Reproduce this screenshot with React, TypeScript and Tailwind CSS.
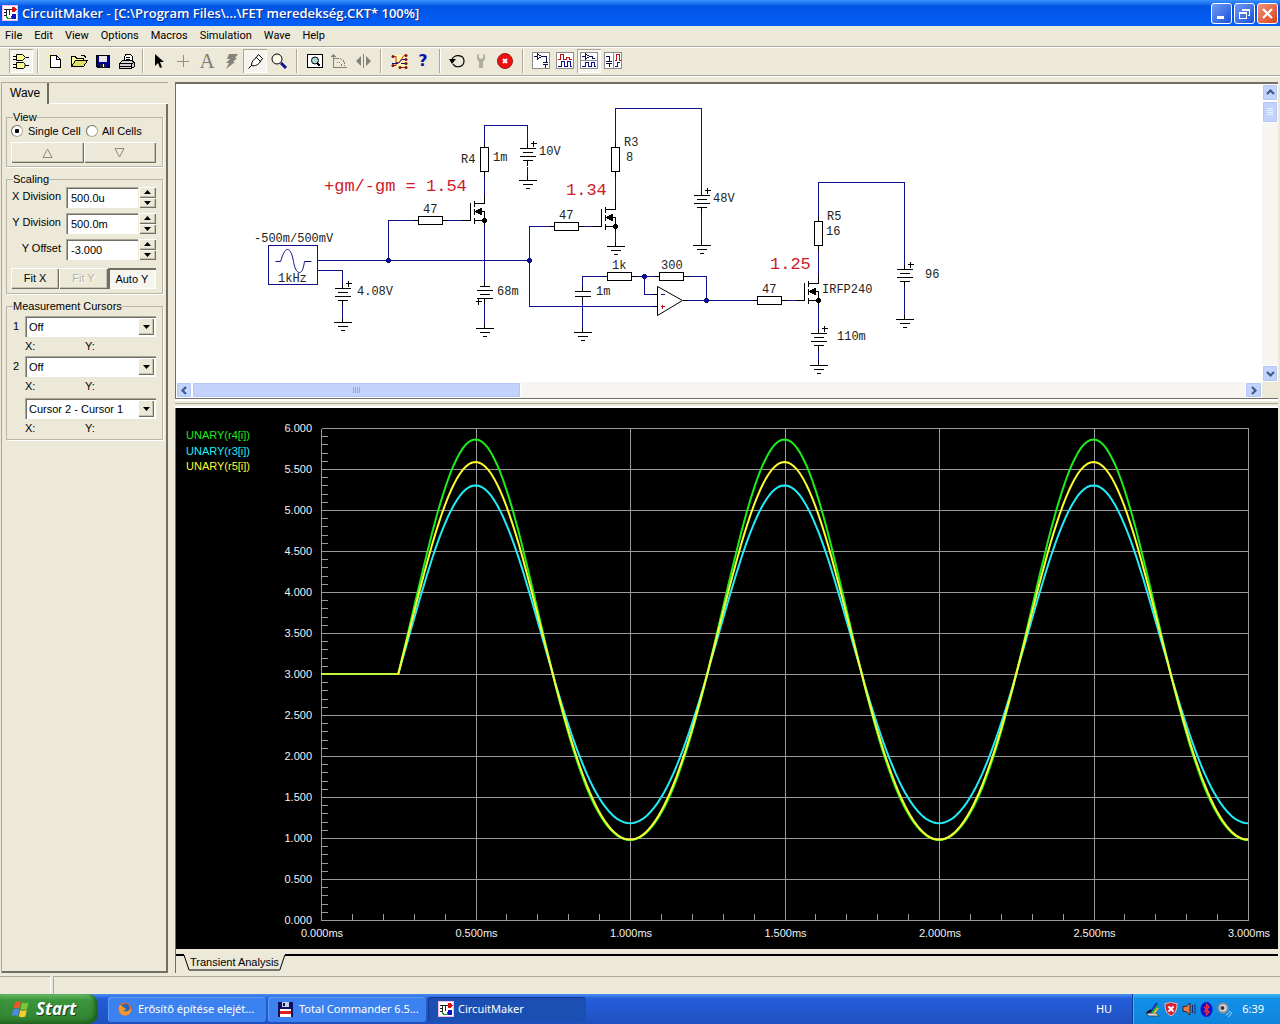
import React, { useState } from "react";

const WIRE = "#10108c";

/* ---------- toolbar icons (20 x 20) ---------- */

function Icon({ children, crisp = true }: { children: React.ReactNode; crisp?: boolean }) {
  return (
    <svg width="20" height="20" viewBox="0 0 20 20" fill="none" stroke="#000" shapeRendering={crisp ? "crispEdges" : "auto"} aria-hidden="true">
      {children}
    </svg>
  );
}

const icons: Record<string, React.ReactNode> = {
  gates: (
    <Icon crisp={false}>
      <path d="M5.500 3.500h6l3 3-3 3h-6zM2 5.500h3M2 8.500h3M15 6.500h3" fill="#ffff90" />
      <path d="M5.500 11.500h7c2 1 2 5 0 6h-7zM2 13.500h3M2 16.500h3M14 14.500h4" fill="#ffff90" />
    </Icon>
  ),
  new: (
    <Icon>
      <path d="M2 4l3 2M14 3l3-1M2 15l3-1M15 15l3 2" stroke="#ffff50" />
      <path d="M5.500 4.500h6l4 4v8h-10zM11.500 4.500v4h4" fill="#fff" />
    </Icon>
  ),
  open: (
    <Icon>
      <path d="M2.500 15.500v-10h4l1 2h7v2" fill="#ffff90" />
      <path d="M2.500 15.500l4-6h12l-4 6z" fill="#e0e060" />
      <path d="M12 4.500h3l2 2" />
    </Icon>
  ),
  save: (
    <Icon>
      <path d="M3.500 4.500h13v12h-12l-1-1z" fill="#000090" />
      <path d="M6 5h8v6H6z" fill="#e8e8e8" stroke="none" />
      <path d="M7 13h6v4H7z" fill="#222" stroke="none" />
      <path d="M10.500 13v3" stroke="#fff" />
    </Icon>
  ),
  print: (
    <Icon>
      <path d="M6.500 10.500l2-7h5l2 2v5" fill="#fff" />
      <path d="M9 6.500h4M9 8.500h4" />
      <path d="M2.500 12.500l3-3h9l3 2v4l-3 2h-12z" fill="#d0d0d0" />
      <path d="M2.500 12.500h12v4M14.500 12.500l3-1M3 15.500h11" />
    </Icon>
  ),
  pointer: (
    <Icon crisp={false}>
      <path d="M6 3v12l3-3 2 5 2-1-2-5h4z" fill="#000" stroke="none" />
    </Icon>
  ),
  plus: (
    <Icon>
      <path d="M4 10.500h12M10.500 4v12" stroke="#929085" />
    </Icon>
  ),
  text: <span className="font-['Liberation_Serif',serif] text-[21px] leading-5 text-[#7f7d74]">A</span>,
  bolt: (
    <Icon crisp={false}>
      <path d="M8 3h9l-3 4h2l-4 4h2l-9 7 3-6H5l4-4H6z" fill="#858379" stroke="none" />
    </Icon>
  ),
  probe: (
    <Icon crisp={false}>
      <path d="M3.500 17.500l3-3M6.500 14.500c0-4 2-6 5-8l4 4c-2 3-5 5-9 4zM10.500 7.500l3-4 4 4-3 4" fill="#fff" />
    </Icon>
  ),
  magnify: (
    <Icon crisp={false}>
      <circle cx="8" cy="8" r="5" fill="#fffff0" />
      <path d="M12 12l5 5" stroke="#101090" strokeWidth="3" />
    </Icon>
  ),
  fit: (
    <Icon>
      <path d="M2.500 3.500h15v13h-15z" fill="#fff" />
      <circle cx="10" cy="9.500" r="3.500" fill="#a8d8d8" shapeRendering="auto" />
      <path d="M12 12l3 3" strokeWidth="2" />
    </Icon>
  ),
  rotate: (
    <Icon>
      <path d="M4.500 3v13h13M2 5.500h5M3 4.500h3M5 7.500h5" stroke="#858379" />
      <path d="M8 7c5 0 8 3 8 8M13 15c0-2-2-4-5-4" stroke="#858379" strokeDasharray="2 1" />
    </Icon>
  ),
  mirror: (
    <Icon crisp={false}>
      <path d="M8 5v10L3 10zM13 5v10l5-5z" fill="#858379" stroke="none" />
      <path d="M10.500 3v14" stroke="#858379" />
    </Icon>
  ),
  wires: (
    <Icon crisp={false}>
      <path d="M4 4h14v13H4z" fill="#fdf6b4" stroke="none" />
      <path d="M3 5.500h4v9H3M7 11.500h3l5-7h3M11 16.500h7" stroke="#d02010" />
      <path d="M3 12.500h6l4-4h5M12 12.500h6" stroke="#1010a0" />
      <g fill="#801010" stroke="none">
        <circle cx="4" cy="5.500" r="1.500" /><circle cx="4" cy="14.500" r="1.500" />
        <circle cx="17" cy="4.500" r="1.500" /><circle cx="17" cy="8.500" r="1.500" />
        <circle cx="17" cy="12.500" r="1.500" /><circle cx="11" cy="16.500" r="1.500" /><circle cx="17" cy="16.500" r="1.500" />
      </g>
    </Icon>
  ),
  help: <span className="font-['DejaVu_Sans',sans-serif] text-[16px] leading-5 font-bold text-[#1010b0]">?</span>,
  reset: (
    <Icon crisp={false}>
      <path d="M5 9c1-6 12-6 12 1s-9 7-11 3" strokeWidth="1.200" />
      <path d="M2 8h7l-4 5z" fill="#000" stroke="none" />
    </Icon>
  ),
  wrench: (
    <Icon crisp={false}>
      <path d="M6 4v4l2 3v6h4v-6l2-3V4l-2-1v4l-2 1-2-1V3z" fill="#b0ada1" stroke="none" />
    </Icon>
  ),
  stop: (
    <Icon crisp={false}>
      <circle cx="10" cy="10" r="7.500" fill="#ee1010" stroke="#a01818" />
      <path d="M8 8l4 4M12 8l-4 4" stroke="#fff" strokeWidth="2" />
    </Icon>
  ),
  schematicView: (
    <Icon>
      <path d="M1.500 1.500h17v16h-17z" fill="#fff" stroke="#8c8c8c" />
      <path d="M3 5.500h3M10 5.500h5v6M12 11.500h5M12 13.500h5M14.500 14v3" stroke="#101050" />
      <path d="M6.500 3v5l4-2.500z" stroke="#101050" />
    </Icon>
  ),
  waveView: (
    <Icon>
      <path d="M1.500 1.500h17v16h-17z" fill="#fff" stroke="#8c8c8c" />
      <path d="M3 8.500h2v-5h3v5h3v-2h3v2h3" stroke="#c01010" />
      <path d="M3 15.500h3v-5h3v5h3v-5h3v5h2" stroke="#101090" />
    </Icon>
  ),
  splitH: (
    <Icon>
      <path d="M1.500 1.500h17v16h-17zM2 9.500h16" fill="#fff" stroke="#8c8c8c" />
      <path d="M3 5.500h3M10 5.500h3v2h3M6.500 3v5l4-2.500z" stroke="#101050" />
      <path d="M3 15.500h3v-4h3v4h3v-4h3v4h2" stroke="#101090" />
    </Icon>
  ),
  splitV: (
    <Icon>
      <path d="M1.500 1.500h17v16h-17zM10.500 2v16" fill="#fff" stroke="#8c8c8c" />
      <path d="M3 5.500h3v5M3 10.500h6M3 12.500h6M6.500 13v3" stroke="#101050" />
      <path d="M12 9.500h1v-6h3v6h2" stroke="#c01010" />
      <path d="M12 15.500h2v-4h3" stroke="#101090" />
    </Icon>
  ),
};

const toolGroups: { gap: string; tools: [string, string, boolean?][] }[] = [
  { gap: "w-2.5", tools: [["gates", "Parts", true]] },
  { gap: "w-2", tools: [["new", "New"], ["open", "Open"], ["save", "Save"], ["print", "Print"]] },
  { gap: "w-3", tools: [["pointer", "Arrow"], ["plus", "Wire"], ["text", "Text"], ["bolt", "Delete"], ["probe", "Probe", true], ["magnify", "Zoom"]] },
  { gap: "w-3", tools: [["fit", "Fit"], ["rotate", "Rotate"], ["mirror", "Mirror"]] },
  { gap: "w-2.5", tools: [["wires", "Digital"], ["help", "Help"]] },
  { gap: "w-3", tools: [["reset", "Reset"], ["wrench", "Setup"], ["stop", "Stop"]] },
  { gap: "", tools: [["schematicView", "Schematic"], ["waveView", "Waveforms"], ["splitH", "Split horizontal", true], ["splitV", "Split vertical"]] },
];

function Toolbar() {
  return (
    <div className="flex h-7 shrink-0 items-center border-t border-[#aca899] pl-[9px] shadow-[inset_0_1px_0_#fff]">
      {toolGroups.map((g, i) => (
        <React.Fragment key={i}>
          {g.tools.map(([id, label, pressed]) => (
            <button
              key={id}
              aria-label={label}
              className={
                pressed
                  ? "flex size-6 items-center justify-center bg-[#f5f4ee] shadow-[inset_1px_1px_0_#aca899,inset_-1px_-1px_0_#fff]"
                  : "flex size-6 items-center justify-center"
              }
            >
              {icons[id]}
            </button>
          ))}
          {g.gap && (
            <div className={`flex h-6 justify-center ${g.gap}`}>
              <div className="w-0.5 border-l border-[#aca899] bg-white" />
            </div>
          )}
        </React.Fragment>
      ))}
    </div>
  );
}

/* ---------- title bar ---------- */

function AppIcon({ size }: { size: number }) {
  return (
    <svg width={size} height={size} viewBox="0 0 16 16" aria-hidden="true" shapeRendering="crispEdges">
      <rect x=".5" y=".5" width="15" height="15" fill="#fff" stroke="#f8b8e8" />
      <path d="M2 4.500h8M2 7.500h2M4.500 5v6M7.500 5v5M2 10.500h3" stroke="#222" fill="none" />
      <path d="M10 2h2l3 2-3 3h-2z" fill="#e01010" />
      <path d="M4 11.500l2 2h3l1-2" stroke="#10a020" fill="none" />
      <circle cx="12" cy="11.500" r="2.500" fill="#1010c8" />
    </svg>
  );
}

const winBtn = "flex size-[21px] items-center justify-center rounded-[3px] border border-white bg-linear-to-br text-white";

function TitleBar() {
  return (
    <header className="flex h-[26px] shrink-0 items-center bg-linear-to-b from-[#3a93ff] via-[#0054e3] via-25% to-[#0560fa] pr-[2px] pl-[2px]">
      <AppIcon size={16} />
      <h1 className="ml-1 min-w-0 flex-1 truncate pt-0.5 font-['Open_Sans',sans-serif] text-[13px] font-semibold text-white [text-shadow:1px_1px_0_#0a2a8a]">
        CircuitMaker - [C:\Program Files\...\FET meredekség.CKT* 100%]
      </h1>
      <div className="flex gap-0.5">
        <button aria-label="Minimize" className={`${winBtn} from-[#6f9bf5] to-[#1a4fd8]`}>
          <svg width="15" height="15"><path d="M3 10h7v3H3z" fill="#fff" /></svg>
        </button>
        <button aria-label="Restore" className={`${winBtn} from-[#6f9bf5] to-[#1a4fd8]`}>
          <svg width="15" height="15" fill="none" stroke="#fff" shapeRendering="crispEdges">
            <path d="M2.500 6.500h7v6h-7zM2 7.500h8M5.500 5V3.500h7v6H11M5 4.500h8" />
          </svg>
        </button>
        <button aria-label="Close" className={`${winBtn} from-[#f09078] to-[#d8400c]`}>
          <svg width="15" height="15"><path d="M3 3l9 9M12 3l-9 9" stroke="#fff" strokeWidth="2.200" /></svg>
        </button>
      </div>
    </header>
  );
}

function MenuBar() {
  return (
    <nav className="flex h-5 shrink-0 items-center gap-3 pl-[5px] font-['Roboto',sans-serif] text-[11px] text-black">
      {["File", "Edit", "View", "Options", "Macros", "Simulation", "Wave", "Help"].map((m) => (
        <button key={m}>{m}</button>
      ))}
    </nav>
  );
}

/* ---------- side panel ---------- */

const raised = "bg-[#ece9d8] shadow-[inset_1px_1px_0_#fff,inset_-1px_-1px_0_#716f64,inset_-2px_-2px_0_#c5c2b2]";
const sunken = "bg-white shadow-[inset_1px_1px_0_#aca899,inset_2px_2px_0_#716f64,inset_-1px_-1px_0_#fff]";
const group = "border border-[#bab6a6] pl-1 pr-1.5 shadow-[1px_1px_0_#fff]";

function Tri({ up = false }: { up?: boolean }) {
  return (
    <svg width="7" height="4" viewBox="0 0 7 4" aria-hidden="true">
      <path d={up ? "M0 4L3.500 0L7 4z" : "M0 0h7L3.500 4z"} />
    </svg>
  );
}

function ScaleRow({ id, label, value }: { id: string; label: string; value: string }) {
  return (
    <div className="mb-[5px] flex h-[21px] items-center">
      <label htmlFor={id} className="w-[50px] pb-0.5 text-right whitespace-nowrap">{label}</label>
      <input id={id} defaultValue={value} className={`ml-[5px] h-full w-[72px] min-w-0 px-[5px] ${sunken}`} />
      <div className="ml-px flex h-full flex-1 flex-col">
        <button aria-label={`${label} up`} className={`flex flex-1 items-center justify-center ${raised}`}><Tri up /></button>
        <button aria-label={`${label} down`} className={`flex flex-1 items-center justify-center ${raised}`}><Tri /></button>
      </div>
    </div>
  );
}

function CursorSelect({ id, num, name, options }: { id: string; num: string; name: string; options: string[] }) {
  return (
    <div>
      <div className="flex h-[21px] items-center">
        <label htmlFor={id} className="w-[14px] pl-0.5">{num}</label>
        <div className="relative h-full flex-1">
          <select id={id} aria-label={name} className={`size-full appearance-none px-1 pt-0.5 ${sunken}`}>
            {options.map((o) => <option key={o}>{o}</option>)}
          </select>
          <span className={`pointer-events-none absolute inset-y-0.5 right-0.5 flex w-4 items-center justify-center ${raised}`}><Tri /></span>
        </div>
      </div>
      <div className="flex h-[19px] items-center pl-3.5">
        <span className="w-[60px]">X:</span>
        <span>Y:</span>
      </div>
    </div>
  );
}

function SidePanel() {
  const [cells, setCells] = useState("single");
  const radio = "size-3 appearance-none rounded-full border border-[#aca899] border-t-[#716f64] border-l-[#716f64] bg-white checked:bg-[radial-gradient(circle,#000_2px,#fff_2.5px)]";
  return (
    <aside className="flex w-[167px] shrink-0 flex-col border-t border-l border-[#aca899] font-['Liberation_Sans',sans-serif] text-[11px] leading-[13px] text-black">
      <div className="flex h-[21px]">
        <button className="w-[47px] border-r-2 border-[#716f64] text-left pl-2 text-[12px]">Wave</button>
        <div className="flex-1 border-b border-white" />
      </div>
      <div className="flex flex-1 flex-col gap-1.5 border-r-2 border-b-2 border-[#716f64] border-t-0 pt-[7px] pr-[3px] pl-1">
        <fieldset className={`pb-[3px] ${group}`}>
          <legend className="ml-0.5">View</legend>
          <div className="flex h-[18px] items-center">
            <label className="flex w-[75px] items-center gap-[5px] pb-1 whitespace-nowrap">
              <input type="radio" name="cells" className={radio} checked={cells === "single"} onChange={() => setCells("single")} />
              Single Cell
            </label>
            <label className="flex items-center gap-1 pb-1 whitespace-nowrap">
              <input type="radio" name="cells" className={radio} checked={cells === "all"} onChange={() => setCells("all")} />
              All Cells
            </label>
          </div>
          <div className="flex h-[21px]">
            <button aria-label="Up" className={`flex flex-1 items-center justify-center ${raised}`}>
              <svg width="11" height="10" fill="none" stroke="#8d8a7e"><path d="M1 9.500L5.500 1L10 9.500z" /></svg>
            </button>
            <button aria-label="Down" className={`flex flex-1 items-center justify-center ${raised}`}>
              <svg width="11" height="10" fill="none" stroke="#8d8a7e"><path d="M1 .5h9L5.500 9z" /></svg>
            </button>
          </div>
        </fieldset>
        <fieldset className={`pb-1 ${group}`}>
          <legend className="mb-px ml-0.5">Scaling</legend>
          <ScaleRow id="xdiv" label="X Division" value="500.0u" />
          <ScaleRow id="ydiv" label="Y Division" value="500.0m" />
          <ScaleRow id="yoff" label="Y Offset" value="-3.000" />
          <div className="mt-2 flex h-[21px]">
            <button className={`flex-1 ${raised}`}>Fit X</button>
            <button disabled className={`flex-1 text-[#b5b2a2] [text-shadow:1px_1px_0_#fff] ${raised}`}>Fit Y</button>
            <button className="flex-1 bg-[#f6f5f0] pt-0.5 shadow-[inset_2px_2px_0_#716f64,inset_-1px_-1px_0_#fff]">Auto Y</button>
          </div>
        </fieldset>
        <fieldset className={`pb-px ${group}`}>
          <legend className="mb-[3px] ml-0.5">Measurement Cursors</legend>
          <CursorSelect id="c1" num="1" name="Cursor 1" options={["Off"]} />
          <CursorSelect id="c2" num="2" name="Cursor 2" options={["Off"]} />
          <div className="mt-0.5"><CursorSelect id="c3" num="" name="Difference" options={["Cursor 2 - Cursor 1"]} /></div>
        </fieldset>
      </div>
    </aside>
  );
}

/* ---------- schematic ---------- */

function Ground({ x, y }: { x: number; y: number }) {
  return <path d={`M${x} ${y - 5}v5M${x - 9} ${y}h18M${x - 5} ${y + 4}h10M${x - 2} ${y + 8}h4`} />;
}

function Battery({ x, y, flip = false }: { x: number; y: number; flip?: boolean }) {
  const a = flip ? 5 : 8;
  const b = flip ? 8 : 5;
  const px = flip ? x - 6 : x + 6;
  const py = flip ? y + 15 : y - 5;
  return (
    <path
      d={`M${x} ${y - 5}v5M${x - a} ${y}h${2 * a}M${x - b} ${y + 4}h${2 * b}M${x - a} ${y + 8}h${2 * a}M${x - b} ${y + 12}h${2 * b}M${x} ${y + 12}v5M${px - 3} ${py}h6M${px} ${py - 3}v6`}
    />
  );
}

function ResistorH({ x, y }: { x: number; y: number }) {
  return <path d={`M${x - 12} ${y - 4}h24v8h-24zM${x - 17} ${y}h5M${x + 12} ${y}h5`} />;
}

function ResistorV({ x, y }: { x: number; y: number }) {
  return <path d={`M${x - 4} ${y - 12}h8v24h-8zM${x} ${y - 17}v5M${x} ${y + 12}v5`} />;
}

function Mosfet({ x, y }: { x: number; y: number }) {
  return (
    <>
      <path
        d={`M${x} ${y - 26}v9h-10M${x - 10} ${y - 20}v6M${x - 10} ${y - 12}v6M${x - 10} ${y - 3}v6M${x - 14} ${y - 18}v18h-9M${x - 10} ${y}h10v-9h-10M${x} ${y}v5`}
      />
      <path d={`M${x - 9} ${y - 9}l6-3v6z`} fill="#000" />
      <circle cx={x} cy={y} r="2" fill="#000" />
    </>
  );
}

const wires = [
  "M484 142v-17h43v18", "M527 166v10", "M484 176v18", "M388 260v-40h25", "M447 220h14", "M317 260h212",
  "M484 220v61", "M484 303v20", "M317 270h25v13", "M342 305v12", "M529 260v-34h20", "M529 260v46h123", "M583 226h9",
  "M615 142v-34h86v82", "M615 176v24", "M701 212v29", "M615 231v11", "M582 286v-10h20", "M582 301v26",
  "M636 276h18", "M644 276v18h8", "M688 276h18v24", "M687 300h65", "M786 300h9", "M818 216v-34h86v82",
  "M818 250v24", "M904 286v29", "M818 305v23", "M818 350v11",
];

const partLabels: [number, number, string][] = [
  [461, 163, "R4"], [493, 161, "1m"], [539, 155, "10V"], [423, 213, "47"], [254, 242, "-500m/500mV"], [278, 282, "1kHz"],
  [357, 295, "4.08V"], [497, 295, "68m"], [624, 146, "R3"], [626, 161, "8"], [713, 202, "48V"], [559, 219, "47"],
  [612, 269, "1k"], [661, 269, "300"], [596, 295, "1m"], [827, 220, "R5"], [826, 235, "16"], [762, 293, "47"],
  [822, 293, "IRFP240"], [925, 278, "96"], [837, 340, "110m"],
];

function Schematic() {
  return (
    <svg width="1085" height="298" viewBox="176 84 1085 298" className="block max-w-none font-['Liberation_Mono',monospace]" role="img" aria-label="Schematic">
      <g transform="translate(.5 .5)" fill="none" stroke="#000" shapeRendering="crispEdges">
        <path d={wires.join("")} stroke={WIRE} />
        <path d="M268 245h49v39h-49z" stroke={WIRE} />
        <path d="M275 261h5C282 255 284 249 287 249C290 249 292 255 293 261C294 267 296 272 299 272C302 272 303 267 304 261H311" stroke={WIRE} shapeRendering="auto" />
        <Battery x={527} y={148} /><Battery x={342} y={288} /><Battery x={484} y={286} flip />
        <Battery x={701} y={195} /><Battery x={904} y={269} /><Battery x={818} y={333} />
        <Ground x={527} y={180} /><Ground x={342} y={322} /><Ground x={484} y={328} /><Ground x={615} y={246} />
        <Ground x={701} y={245} /><Ground x={582} y={332} /><Ground x={904} y={319} /><Ground x={818} y={365} />
        <ResistorV x={484} y={159} /><ResistorV x={615} y={159} /><ResistorV x={818} y={233} />
        <ResistorH x={430} y={220} /><ResistorH x={566} y={226} /><ResistorH x={769} y={300} />
        <ResistorH x={619} y={276} /><ResistorH x={671} y={276} />
        <Mosfet x={484} y={220} /><Mosfet x={615} y={226} /><Mosfet x={818} y={300} />
        <path d="M582 286v5M574 291h16M574 296h16M582 296v5M652 294h5M652 306h5M682 300h5" />
        <path d="M657 286v29l25-15z" shapeRendering="auto" />
        <path d="M660 294h4" stroke={WIRE} />
        <path d="M660 306h4M662 304v4" stroke="#c01020" />
        <g fill={WIRE} stroke={WIRE}>
          <circle cx="388" cy="260" r="2" /><circle cx="529" cy="260" r="2" /><circle cx="644" cy="276" r="2" /><circle cx="706" cy="300" r="2" />
        </g>
      </g>
      <g fontSize="12" fill="#222">
        {partLabels.map(([x, y, t]) => <text key={`${x}-${y}`} x={x} y={y}>{t}</text>)}
      </g>
      <g fontSize="17" fill="#d01828">
        <text x="324" y="191">+gm/-gm = 1.54</text>
        <text x="566" y="195">1.34</text>
        <text x="770" y="269">1.25</text>
      </g>
    </svg>
  );
}

/* ---------- scrollbars ---------- */

function Chevron({ d }: { d: string }) {
  return <svg width="9" height="9" fill="none" stroke="#3d5a8c" strokeWidth="2.200" aria-hidden="true"><path d={d} /></svg>;
}

const sbPart = "flex items-center justify-center rounded-[2px] border border-white bg-[#c3d3fc] shadow-[inset_0_0_0_1px_#b2c6f6]";

function SchematicPane() {
  return (
    <section className="grid h-[317px] shrink-0 grid-cols-[1fr_16px] grid-rows-[1fr_16px] border-t-2 border-b border-l border-[#716f64] bg-white">
      <div className="overflow-hidden"><Schematic /></div>
      <div className="flex flex-col bg-[#f6f5f1]">
        <button aria-label="Scroll up" className={`${sbPart} h-[17px]`}><Chevron d="M1 6l3.500-3.500L8 6" /></button>
        <div className={`${sbPart} h-[22px]`}>
          <svg width="7" height="8" stroke="#eef4fe" shapeRendering="crispEdges"><path d="M0 .5h6M0 2.500h6M0 4.500h6M0 6.500h6" /></svg>
        </div>
        <div className="flex-1" />
        <button aria-label="Scroll down" className={`${sbPart} h-[17px]`}><Chevron d="M1 3l3.500 3.500L8 3" /></button>
      </div>
      <div className="flex bg-[#f6f5f1]">
        <button aria-label="Scroll left" className={`${sbPart} w-4`}><Chevron d="M6 1L2.500 4.500L6 8" /></button>
        <div className={`${sbPart} w-[329px]`}>
          <svg width="8" height="7" stroke="#8fa8e0" shapeRendering="crispEdges"><path d="M.5 0v6M2.500 0v6M4.500 0v6M6.500 0v6" /></svg>
        </div>
        <div className="flex-1" />
        <button aria-label="Scroll right" className={`${sbPart} w-[17px]`}><Chevron d="M3 1l3.500 3.500L3 8" /></button>
      </div>
      <div className="bg-[#ece9d8]" />
    </section>
  );
}

/* ---------- waveform chart ---------- */

const X0 = 321;
const Y0 = 920;
const PX_PER_MS = 309;
const PX_PER_UNIT = 82;
const xOf = (ms: number) => X0 + ms * PX_PER_MS;
const yOf = (v: number) => Y0 - v * PX_PER_UNIT;

function curve(peak: number, trough: number) {
  const a = (peak - trough) / 2;
  const b = (peak + trough) / 2 - 3;
  let d = `M${X0} ${yOf(3)}`;
  for (let t = 0.25; t <= 3.0001; t += 0.01) {
    const s = Math.sin(2 * Math.PI * (t - 0.25));
    d += `L${xOf(t).toFixed(1)} ${yOf(3 + a * s + b * s * s).toFixed(1)}`;
  }
  return d;
}

const yTicks = Array.from({ length: 13 }, (_, i) => i * 0.5);
const xTicks = Array.from({ length: 7 }, (_, i) => i * 0.5);
const yMinor = Array.from({ length: 61 }, (_, i) => i * 0.1);
const xMinor = Array.from({ length: 31 }, (_, i) => i * 0.1);

function Chart() {
  return (
    <svg viewBox="176 408 1102 541" preserveAspectRatio="xMinYMin meet" className="block size-full font-['Liberation_Sans',sans-serif]" role="img" aria-label="Transient analysis waveforms">
      <g stroke="#9a9a9a" shapeRendering="crispEdges" transform="translate(.5 .5)">
        {yTicks.map((v) => <path key={v} d={`M${X0} ${yOf(v)}H${xOf(3)}`} />)}
        {xTicks.map((t) => <path key={t} d={`M${Math.round(xOf(t))} ${yOf(6)}V${Y0}`} />)}
        {yMinor.map((v) => <path key={v} d={`M${X0} ${Math.round(yOf(v))}h6`} />)}
        {xMinor.map((t) => <path key={t} d={`M${Math.round(xOf(t))} ${Y0}v-7`} />)}
      </g>
      <g fill="none" strokeWidth="2" strokeLinejoin="round">
        <path d={curve(5.3, 1.18)} stroke="#22ecf8" />
        <path d={curve(5.86, 0.975)} stroke="#1cec1c" />
        <path d={curve(5.585, 0.98)} stroke="#fcfc30" />
        <path d={`M${X0} ${yOf(3)}H398`} stroke="#c0f83c" />
      </g>
      <g fontSize="11">
        <text x="186" y="439" fill="#1cec1c">UNARY(r4[i])</text>
        <text x="186" y="455" fill="#22ecf8">UNARY(r3[i])</text>
        <text x="186" y="470" fill="#fcfc30">UNARY(r5[i])</text>
        <g fill="#f0f0f0">
          {yTicks.map((v) => <text key={v} x="312" y={yOf(v) + 4} textAnchor="end">{v.toFixed(3)}</text>)}
          {xTicks.map((t) => <text key={t} x={xOf(t) + 1} y="937" textAnchor="middle">{t.toFixed(3)}ms</text>)}
        </g>
      </g>
    </svg>
  );
}

function ChartPane() {
  return (
    <section className="flex min-h-0 flex-1 flex-col border-l border-[#716f64]">
      <div className="min-h-0 flex-1 bg-black"><Chart /></div>
      <div className="flex h-6 items-start pt-[5px]">
        <div className="w-2 border-t-2 border-black" />
        <button className="relative h-[17px] px-1.5 font-['Liberation_Sans',sans-serif] text-[11px] leading-[17px] whitespace-nowrap">
          <svg className="absolute inset-0 size-full" viewBox="0 0 100 17" preserveAspectRatio="none" fill="none" stroke="#000" aria-hidden="true">
            <path d="M0 1L5 16H95L100 1" vectorEffect="non-scaling-stroke" />
          </svg>
          <span className="relative">Transient Analysis</span>
        </button>
        <div className="flex-1 border-t-2 border-black" />
      </div>
    </section>
  );
}

/* ---------- task bar ---------- */

function TaskBar() {
  const task = "flex h-[25px] w-[158px] items-center gap-1.5 rounded-[3px] pl-2.5 text-left shadow-[inset_1px_1px_0_#5c9bfa]";
  return (
    <footer className="flex h-[30px] shrink-0 items-center bg-linear-to-b from-[#4a90f4] via-[#245edb] via-15% to-[#1f50bf] font-['Noto_Sans',sans-serif] text-[11px] text-white">
      <button className="flex h-full w-[98px] items-center gap-1.5 rounded-r-[10px] bg-linear-to-b from-[#6cbf6c] via-[#3c963c] via-20% to-[#2f7f2f] pl-3 font-['Open_Sans',sans-serif] text-[17px] font-bold italic shadow-[inset_-3px_-2px_4px_#1d5c1d] [text-shadow:1px_1px_1px_#1a3a1a]">
        <svg width="18" height="18" viewBox="0 0 18 18" aria-hidden="true">
          <path d="M3 2c2-1 4-1 6 0L7.500 8.500c-2-1-4-1-6 0z" fill="#e8582a" />
          <path d="M10 2.500c2 1 4 1 6.500 0L15 9c-2 1-4 1-6.500 0z" fill="#7cc83a" />
          <path d="M1.300 9.500c2-1 4-1 6 0L5.800 16c-2-1-4-1-6 0z" fill="#4a8af0" />
          <path d="M8.300 10c2 1 4 1 6.500 0l-1.500 6.500c-2 1-4 1-6.500 0z" fill="#f8cc30" />
        </svg>
        Start
      </button>
      <div className="ml-2.5 flex min-w-0 flex-1 gap-0.5">
        <button className={`${task} bg-[#3c81f0]`}>
          <svg width="14" height="14" viewBox="0 0 14 14" aria-hidden="true">
            <circle cx="7" cy="7" r="6.500" fill="#e8681c" />
            <circle cx="7.500" cy="6" r="4.200" fill="#2868b8" />
            <path d="M1 4c2-1 3 0 4 1s3 1 3 2-3 1-2 2 5 1 7-3c1 5-3 7.500-6 7.500S0 11 1 4z" fill="#f89828" />
          </svg>
          Erősítő építése elejét...
        </button>
        <button className={`${task} bg-[#3c81f0]`}>
          <svg width="15" height="15" viewBox="0 0 15 15" shapeRendering="crispEdges" aria-hidden="true">
            <path d="M0 0h15v15H0z" fill="#101060" />
            <path d="M4 0h7v5H4z" fill="#c8d0e8" /><path d="M5 1h2v3H5z" fill="#101060" />
            <path d="M2 7h11v8H2z" fill="#fff" /><path d="M2 9h11v3H2z" fill="#e02020" />
          </svg>
          Total Commander 6.5...
        </button>
        <button className="flex h-[25px] w-[158px] items-center gap-1 rounded-[3px] bg-[#1c4fb4] pl-2.5 text-left shadow-[inset_1px_1px_1px_#123a8c]">
          <AppIcon size={16} />
          CircuitMaker
        </button>
      </div>
      <span className="mr-5">HU</span>
      <div className="flex h-full items-center gap-1 border-l border-[#0a3a9c] bg-linear-to-b from-[#3cb4f8] via-[#1290e8] via-15% to-[#0f84dc] pr-4 pl-3 shadow-[inset_1px_0_0_#3cb4f8]">
        <svg width="15" height="15" viewBox="0 0 15 15" aria-hidden="true">
          <path d="M1 11h10l3 3H4z" fill="#d8d8d0" stroke="#333" strokeWidth=".7" />
          <path d="M12 1L5 11" stroke="#1828c8" strokeWidth="2" /><path d="M13 3L7 11" stroke="#20a830" strokeWidth="2" />
          <path d="M13 6l-4 5" stroke="#e8c020" strokeWidth="2" /><path d="M2 11l4-3" stroke="#111" strokeWidth="2" />
        </svg>
        <svg width="14" height="14" viewBox="0 0 14 14" aria-hidden="true">
          <path d="M7 0c2 1 4 1.500 6 1.500C13 7 12 11 7 14 2 11 1 7 1 1.500 3 1.500 5 1 7 0z" fill="#d82030" stroke="#f0c0c0" />
          <path d="M4.500 4.500l5 5M9.500 4.500l-5 5" stroke="#fff" strokeWidth="2" />
        </svg>
        <svg width="14" height="14" viewBox="0 0 14 14" aria-hidden="true">
          <path d="M1 4.500h3L8 1v12L4 9.500H1z" fill="#e87848" stroke="#402020" />
          <path d="M10.500 3v8M13 2v10" stroke="#16286c" fill="none" />
        </svg>
        <svg width="13" height="15" viewBox="0 0 13 15" aria-hidden="true">
          <ellipse cx="6.500" cy="7.500" rx="6" ry="7.500" fill="#1010d0" />
          <path d="M4 5l5 5-2.500 2.500v-10L9 5l-5 5" fill="none" stroke="#e83040" strokeWidth="1.400" />
        </svg>
        <svg width="15" height="15" viewBox="0 0 15 15" aria-hidden="true">
          <circle cx="6" cy="6" r="5.500" fill="#8c9298" /><circle cx="6" cy="6" r="3.500" fill="#dde2e6" />
          <circle cx="5.500" cy="6" r="2" fill="#33383c" />
          <path d="M9 13c2-1 3-2 4-4M11 15c2-1 3-3 4-5" stroke="#b8d8f8" fill="none" />
        </svg>
        <time className="ml-1.5">6:39</time>
      </div>
    </footer>
  );
}

export default function App() {
  return (
    <div className="flex h-screen min-h-[640px] flex-col overflow-hidden bg-[#ece9d8]">
      <TitleBar />
      <MenuBar />
      <Toolbar />
      <main className="mt-px flex min-h-0 flex-1 flex-col border-t border-[#aca899] shadow-[inset_0_1px_0_#fff]">
        <div className="flex min-h-0 flex-1 gap-[7px] pt-1.5 pr-0.5 pl-px">
          <SidePanel />
          <div className="flex min-w-0 flex-1 flex-col">
            <SchematicPane />
            <div className="h-[9px] shrink-0 border-t-2 border-b-2 border-t-white border-b-white py-0.5">
              <div className="h-full border-b border-[#aca899]" />
            </div>
            <ChartPane />
          </div>
        </div>
      </main>
      <div className="mt-[3px] flex h-[18px] shrink-0 gap-0.5">
        <div className="w-[51px] border-t border-r border-t-[#aca899] border-r-white" />
        <div className="flex-1 border-t border-l border-[#aca899]" />
      </div>
      <TaskBar />
    </div>
  );
}
